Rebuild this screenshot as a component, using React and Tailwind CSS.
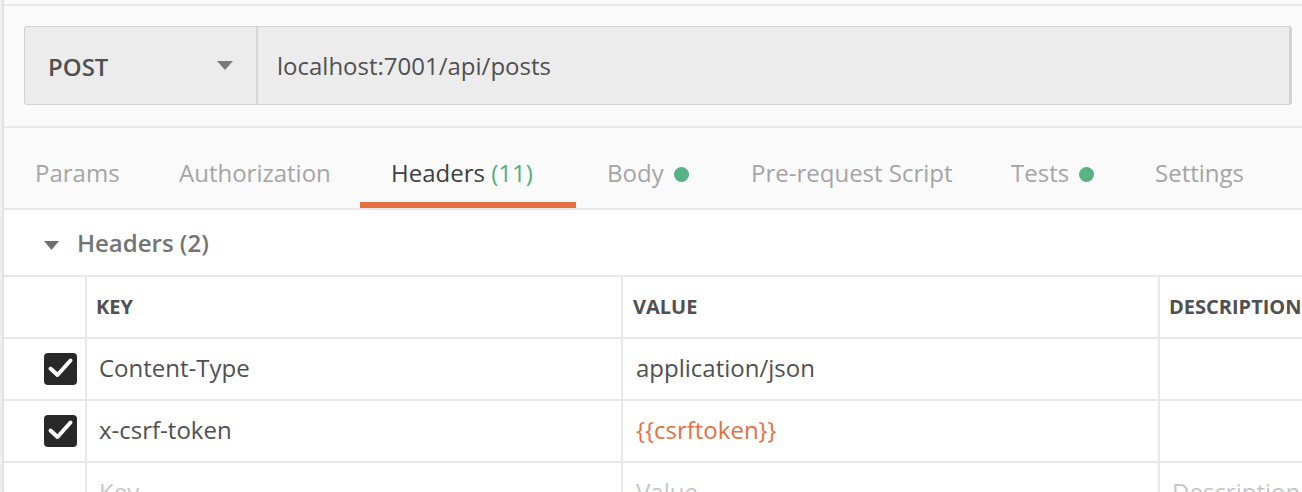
import React from 'react';

const tabs = [
  { label: 'Params', w: 'w-[144px]' },
  { label: 'Authorization', w: 'w-[212px]' },
  { label: 'Headers', count: '(11)', active: true, w: 'w-[216px]' },
  { label: 'Body', dot: true, w: 'w-[144px]' },
  { label: 'Pre-request Script', w: 'w-[260px]' },
  { label: 'Tests', dot: true, w: 'w-[144px]' },
  { label: 'Settings', w: 'w-[150px]' },
];

const rows = [
  { key: 'Content-Type', value: 'application/json' },
  { key: 'x-csrf-token', value: '{{csrftoken}}', variable: true },
];

const CheckBox = () => (
  <div className="w-[33px] h-[32px] rounded-[4px] bg-[#282828] flex items-center justify-center">
    <svg width="33" height="32" viewBox="0 0 33 32">
      <path d="M6.5 15.5 L13.5 22 L26.5 7.5" fill="none" stroke="#fff" strokeWidth="4" strokeLinecap="round" strokeLinejoin="round" />
    </svg>
  </div>
);

const Tab = ({ tab }) => (
  <div
    className={`${tab.w} shrink-0 pl-[31px] pt-[29px] pb-[13px] border-b-[6px] flex items-center gap-[10px] leading-[32px] text-[24px] whitespace-nowrap ${
      tab.active ? 'border-[#e4713f] text-[#404040]' : 'border-transparent text-[#a5a5a5]'
    }`}
  >
    <span>
      {tab.label}
      {tab.count && <span className="text-[#55ad7a]"> {tab.count}</span>}
    </span>
    {tab.dot && <span className="w-[15px] h-[15px] rounded-full bg-[#58b283] mt-[2px]" />}
  </div>
);

export default function App() {
  return (
    <div className="w-[1302px] h-[492px] overflow-hidden flex bg-white font-['Open_Sans',sans-serif]">
      {/* panel edge */}
      <div className="w-[4px] shrink-0 bg-linear-to-r from-[#f4f4f4] to-[#dedede]" />

      <div className="flex-1 flex flex-col">
        <div className="h-[4px] shrink-0 bg-[#fafafa]" />
        <div className="h-[2px] shrink-0 bg-[#e8e8e8]" />

        {/* request url bar */}
        <div className="h-[120px] shrink-0 bg-[#fafafa] pl-[20px] pr-[10px] pt-[20px]">
          <div className="h-[79px] flex bg-[#ececec] border border-[#d3d3d3] border-r-[3px] rounded-[3px]">
            <div className="w-[231px] flex items-center justify-between pl-[23px] pr-[23px] pt-[3px]">
              <span className="text-[24px] leading-[32px] font-semibold text-[#505050]">POST</span>
              <svg width="16" height="9" viewBox="0 0 16 9" className="-mt-[3px]">
                <polygon points="0,0 16,0 8,9" fill="#7a7a7a" />
              </svg>
            </div>
            <div className="w-[2px] bg-[#d6d6d6]" />
            <div className="flex-1 flex items-center pl-[19px] pt-[1px]">
              <span className="text-[24px] leading-[32px] text-[#505050]">localhost:7001/api/posts</span>
            </div>
          </div>
        </div>
        <div className="h-[2px] shrink-0 bg-[#e8e8e8]" />

        {/* tabs */}
        <div className="h-[80px] shrink-0 bg-[#fafafa] flex">
          {tabs.map((t) => (
            <Tab key={t.label} tab={t} />
          ))}
        </div>
        <div className="h-[2px] shrink-0 bg-[#e8e8e8]" />

        {/* section title */}
        <div className="h-[65px] shrink-0 flex items-start pt-[17px] pl-[40px] gap-[18px]">
          <svg width="15" height="9" viewBox="0 0 15 9" className="mt-[14px]">
            <polygon points="0,0 15,0 7.5,9" fill="#6f6f6f" />
          </svg>
          <span className="text-[24px] leading-[32px] font-semibold text-[#747474]">Headers (2)</span>
        </div>

        {/* table */}
        <div className="h-[62px] shrink-0 border-t-2 border-[#e8e8e8] flex">
          <div className="w-[81px] shrink-0" />
          <div className="w-[536px] shrink-0 border-l-2 border-[#e8e8e8] flex items-center pl-[9px]">
            <span className="text-[20px] leading-[28px] font-bold text-[#505050]">KEY</span>
          </div>
          <div className="w-[537px] shrink-0 border-l-2 border-[#e8e8e8] flex items-center pl-[10px]">
            <span className="text-[20px] leading-[28px] font-bold text-[#505050]">VALUE</span>
          </div>
          <div className="flex-1 border-l-2 border-[#e8e8e8] flex items-center pl-[9px] whitespace-nowrap">
            <span className="text-[20px] leading-[28px] font-bold text-[#505050]">DESCRIPTION</span>
          </div>
        </div>

        {rows.map((r) => (
          <div key={r.key} className="h-[62px] shrink-0 border-t-2 border-[#e8e8e8] flex">
            <div className="w-[81px] shrink-0 flex items-center justify-end pr-[8px]">
              <CheckBox />
            </div>
            <div className="w-[536px] shrink-0 border-l-2 border-[#e8e8e8] flex items-center pl-[12px] pb-[3px]">
              <span className="text-[24px] leading-[32px] text-[#505050]">{r.key}</span>
            </div>
            <div className="w-[537px] shrink-0 border-l-2 border-[#e8e8e8] flex items-center pl-[13px] pb-[3px]">
              <span className={`text-[24px] leading-[32px] ${r.variable ? 'text-[#e4713f]' : 'text-[#505050]'}`}>{r.value}</span>
            </div>
            <div className="flex-1 border-l-2 border-[#e8e8e8]" />
          </div>
        ))}

        <div className="h-[62px] shrink-0 border-t-2 border-[#e8e8e8] flex">
          <div className="w-[81px] shrink-0" />
          <div className="w-[536px] shrink-0 border-l-2 border-[#e8e8e8] flex items-center pl-[12px] pb-[3px]">
            <span className="text-[24px] leading-[32px] text-[#c6c6c6]">Key</span>
          </div>
          <div className="w-[537px] shrink-0 border-l-2 border-[#e8e8e8] flex items-center pl-[13px] pb-[3px]">
            <span className="text-[24px] leading-[32px] text-[#c6c6c6]">Value</span>
          </div>
          <div className="flex-1 border-l-2 border-[#e8e8e8] flex items-center pl-[12px] pb-[3px] whitespace-nowrap overflow-hidden">
            <span className="text-[24px] leading-[32px] text-[#c6c6c6]">Description</span>
          </div>
        </div>
      </div>
    </div>
  );
}
